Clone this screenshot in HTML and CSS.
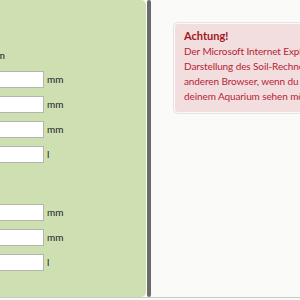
FILE: index.html
```html
<!DOCTYPE html>
<html lang="de">
<head>
<meta charset="utf-8">
<link rel="stylesheet" href="styles.css">
</head>
<body>
<div class="page">
  <section class="calc">
    <div class="group-title">Aquarium</div>
    <div class="row"><label class="lbl">Länge</label><input class="field" type="text"><span class="unit">mm</span></div>
    <div class="row"><label class="lbl">Breite</label><input class="field" type="text"><span class="unit">mm</span></div>
    <div class="row"><label class="lbl">Höhe</label><input class="field" type="text"><span class="unit">mm</span></div>
    <div class="row"><label class="lbl">Volumen</label><input class="field" type="text"><span class="unit">l</span></div>
    <div class="group-title second">Soil</div>
    <div class="row"><label class="lbl">Höhe vorne</label><input class="field" type="text"><span class="unit">mm</span></div>
    <div class="row"><label class="lbl">Höhe hinten</label><input class="field" type="text"><span class="unit">mm</span></div>
    <div class="row"><label class="lbl">Menge</label><input class="field" type="text"><span class="unit">l</span></div>
  </section>
  <div class="divider"></div>
  <section class="result">
    <div class="alert">
      <div class="alert-title">Achtung!</div>
      <p class="alert-text">Der Microsoft Internet Explorer unterstützt leider nicht die<br>Darstellung des Soil-Rechners. Bitte verwende einen<br>anderen Browser, wenn du eine Übersicht zu<br>deinem Aquarium sehen möchtest.</p>
    </div>
  </section>
</div>
</body>
</html>
```
FILE: styles.css
```css
html, body {
  margin: 0;
  padding: 0;
  background: #fafaf8;
  overflow: hidden;
  width: 300px;
  height: 300px;
}
body {
  font-family: Lato, "Open Sans", sans-serif;
  font-size: 10px;
  color: #222;
}
.page {
  display: flex;
  height: 297px;
  border-bottom: 1px solid #c9c9c7;
  overflow: hidden;
}
.calc {
  flex: 0 0 346px;
  margin-left: -200px;
  background: #cedfb1;
  border-radius: 0 5px 5px 0;
  padding-top: 48px;
  box-sizing: border-box;
  display: flex;
  flex-direction: column;
}
.group-title {
  width: 205px;
  text-align: right;
  line-height: 15px;
  height: 15px;
  margin-bottom: 8px;
}
.group-title.second {
  margin-top: 10px;
  text-align: left;
}
.row {
  display: flex;
  align-items: center;
  height: 17px;
  margin-bottom: 8px;
}
.lbl {
  width: 150px;
  flex: 0 0 150px;
}
.field {
  box-sizing: border-box;
  width: 94px;
  height: 17px;
  margin: 0;
  padding: 0 3px;
  border: 1px solid #b4b6ad;
  background: #fff;
  font: inherit;
}
.unit {
  margin-left: 3px;
  line-height: 15px;
  color: #222;
}
.divider {
  flex: 0 0 4px;
  margin-left: 1px;
  background: #6b6b6b;
  border-radius: 2px;
}
.result {
  flex: 1;
  background: #fafaf8;
  padding: 22px 0 0 22px;
  min-width: 0;
  overflow: hidden;
}
.alert {
  width: 260px;
  box-sizing: border-box;
  background: #f2dede;
  border: 1px solid #fdf9f9;
  box-shadow: 0 0 0 1px #e6e3e1;
  border-radius: 4px;
  margin: 1px;
  padding: 4px 8px 8px 9px;
  white-space: nowrap;
}
.alert-title {
  font-size: 11px;
  font-weight: bold;
  line-height: 16px;
  color: #a3151c;
}
.alert-text {
  margin: 0;
  line-height: 15px;
  letter-spacing: -0.1px;
  color: #b81d36;
}
```
